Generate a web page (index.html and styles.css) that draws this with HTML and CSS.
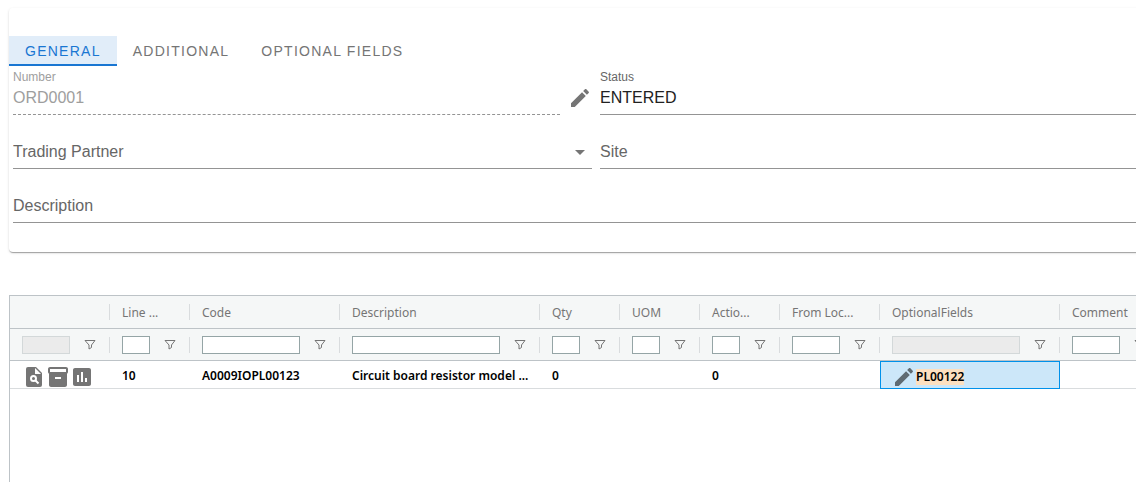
FILE: index.html
```html
<!DOCTYPE html>
<html lang="en">
<head>
<meta charset="utf-8">
<title>Order ORD0001</title>
<link rel="stylesheet" href="styles.css">
</head>
<body>
<svg class="sprite" aria-hidden="true">
  <symbol id="pencil" viewBox="0 0 24 24"><path d="M3 17.25V21h3.750L17.810 9.940l-3.750-3.750L3 17.250zM20.710 7.040c.39-.39.39-1.020 0-1.410l-2.340-2.340c-.39-.39-1.020-.39-1.410 0l-1.830 1.830 3.750 3.750 1.830-1.830z"/></symbol>
  <symbol id="funnel" viewBox="0 0 12 12"><path d="M1 1.500h10L7.500 6v2.500L5 10V6z" fill="none" stroke="currentColor"/></symbol>
</svg>
<main class="page">
  <section class="card">
    <div class="tabs" role="tablist">
      <button class="tab tab-active" role="tab" aria-selected="true">GENERAL</button>
      <button class="tab" role="tab" aria-selected="false">ADDITIONAL</button>
      <button class="tab" role="tab" aria-selected="false">OPTIONAL FIELDS</button>
    </div>
    <form class="form">
      <div class="with-action">
        <div class="field field-disabled">
          <label class="label" for="number">Number</label>
          <input class="control" id="number" value="ORD0001" disabled>
        </div>
        <button class="icon-button" type="button" aria-label="Edit number"><svg class="icon"><use href="#pencil"/></svg></button>
      </div>
      <div class="field">
        <label class="label" for="status">Status</label>
        <input class="control" id="status" value="ENTERED">
      </div>
      <div class="field">
        <select class="control select" aria-label="Trading Partner"><option>Trading Partner</option></select>
        <svg class="icon arrow" viewBox="0 0 24 24"><path d="M7 10l5 5 5-5z"/></svg>
      </div>
      <div class="field"><input class="control" aria-label="Site" placeholder="Site"></div>
      <div class="field field-wide"><input class="control" aria-label="Description" placeholder="Description"></div>
    </form>
  </section>

  <section class="grid">
    <table class="table">
      <colgroup>
        <col class="w100"><col class="w80"><col class="w150"><col class="w200"><col class="w80"><col class="w80"><col class="w80"><col class="w100"><col class="w180"><col class="w100"><col>
      </colgroup>
      <thead>
        <tr class="heads">
          <th></th><th>Line ...</th><th>Code</th><th>Description</th><th>Qty</th><th>UOM</th><th>Actio...</th><th>From Loc...</th><th>OptionalFields</th><th>Comment</th><th></th>
        </tr>
        <tr class="filters">
          <td><div class="filter"><input aria-label="Filter actions" disabled><button aria-label="Filter options"><svg><use href="#funnel"/></svg></button></div></td>
          <td><div class="filter"><input aria-label="Filter line"><button aria-label="Filter options"><svg><use href="#funnel"/></svg></button></div></td>
          <td><div class="filter"><input aria-label="Filter code"><button aria-label="Filter options"><svg><use href="#funnel"/></svg></button></div></td>
          <td><div class="filter"><input aria-label="Filter description"><button aria-label="Filter options"><svg><use href="#funnel"/></svg></button></div></td>
          <td><div class="filter"><input aria-label="Filter quantity"><button aria-label="Filter options"><svg><use href="#funnel"/></svg></button></div></td>
          <td><div class="filter"><input aria-label="Filter unit"><button aria-label="Filter options"><svg><use href="#funnel"/></svg></button></div></td>
          <td><div class="filter"><input aria-label="Filter action"><button aria-label="Filter options"><svg><use href="#funnel"/></svg></button></div></td>
          <td><div class="filter"><input aria-label="Filter from location"><button aria-label="Filter options"><svg><use href="#funnel"/></svg></button></div></td>
          <td><div class="filter"><input aria-label="Filter optional fields" disabled><button aria-label="Filter options"><svg><use href="#funnel"/></svg></button></div></td>
          <td><div class="filter"><input aria-label="Filter comment"><button aria-label="Filter options"><svg><use href="#funnel"/></svg></button></div></td>
          <td></td>
        </tr>
      </thead>
      <tbody>
        <tr class="row">
          <td><div class="cell">
            <button class="icon-button" aria-label="View details"><svg class="icon" viewBox="0 0 24 24"><path d="M6 2h8l6 6v12a2 2 0 0 1-2 2H6a2 2 0 0 1-2-2V4a2 2 0 0 1 2-2z"/><path class="cut" d="M13 3v6h6z"/><circle class="cut-line" cx="11.500" cy="13.500" r="2.500"/><path class="cut-line" d="M13.500 15.500l3 3"/></svg></button>
            <button class="icon-button" aria-label="Archive"><svg class="icon" viewBox="0 0 24 24"><path d="M20 2H4c-1 0-2 .9-2 2v3.010c0 .72.43 1.340 1 1.690V20c0 1.100 1.100 2 2 2h14c.9 0 2-.9 2-2V8.700c.57-.35 1-.97 1-1.690V4c0-1.100-1-2-2-2zm-5 12H9v-2h6v2zm5-7H4V4h16v3z"/></svg></button>
            <button class="icon-button" aria-label="Statistics"><svg class="icon" viewBox="0 0 24 24"><path d="M19 3H5c-1.100 0-2 .9-2 2v14c0 1.100.9 2 2 2h14c1.100 0 2-.9 2-2V5c0-1.100-.9-2-2-2zM9 17H7v-7h2v7zm4 0h-2V7h2v10zm4 0h-2v-4h2v4z"/></svg></button>
          </div></td>
          <td>10</td><td>A0009IOPL00123</td><td>Circuit board resistor model ...</td><td>0</td><td></td><td>0</td><td></td>
          <td class="selected"><div class="cell">
            <button class="icon-button" aria-label="Edit optional fields"><svg class="icon"><use href="#pencil"/></svg></button>
            <mark class="mark">PL00122</mark>
          </div></td>
          <td></td><td></td>
        </tr>
      </tbody>
    </table>
  </section>
</main>
</body>
</html>
```
FILE: styles.css
```css
* { box-sizing: border-box; }
body {
  margin: 0;
  background: #fff;
  font-family: "Liberation Sans", Arial, sans-serif;
}
button { margin: 0; padding: 0; border: 0; background: none; font: inherit; color: inherit; }
.sprite { display: none; }
.page {
  display: flex;
  flex-direction: column;
  min-height: 100vh;
  padding: 8px 0 0 9px;
  overflow: hidden;
}

/* Order form */
.card {
  margin-right: -47px;
  padding: 28px 0 29px;
  border-radius: 4px;
  box-shadow: 0 2px 1px -1px rgba(0, 0, 0, .2), 0 1px 1px rgba(0, 0, 0, .14), 0 1px 3px rgba(0, 0, 0, .12);
}
.tabs { display: flex; }
.tab {
  height: 30px;
  padding: 2px 16px 0;
  border-bottom: 2px solid transparent;
  font-size: 14px;
  letter-spacing: .09em;
  color: #757575;
}
.tab-active { background: #e1edf9; border-color: #1976d2; color: #1976d2; }
.form {
  display: grid;
  grid-template-columns: 1fr 1fr;
  gap: 8px;
  padding: 3px 4px 0;
}
.field {
  position: relative;
  display: flex;
  flex: 1;
  flex-direction: column;
  justify-content: flex-end;
  min-height: 46px;
  color: #666;
}
.field-wide { grid-column: span 2; }
.field-disabled { color: #9e9e9e; }
.label { font-size: 12px; line-height: 16px; }
.control {
  width: 100%;
  height: 30px;
  margin: 0;
  padding: 0 0 3px;
  border: 0;
  border-bottom: 1px solid #949494;
  border-radius: 0;
  outline: 0;
  background: none;
  font: 16px/24px "Liberation Sans", Arial, sans-serif;
  color: #212121;
}
.control::placeholder { color: #666; opacity: 1; }
.control:disabled { border-bottom-style: dashed; color: #9e9e9e; }
.select { appearance: none; color: #666; }
.with-action { display: flex; align-items: center; gap: 8px; }
.with-action .icon-button { padding-top: 12px; }
.icon-button { flex: none; width: 24px; }
.icon { display: block; width: 24px; height: 24px; fill: #757575; }
.arrow { position: absolute; right: 0; bottom: 5px; pointer-events: none; }

/* Order lines */
.grid {
  flex: 1;
  margin-top: 43px;
  border: 1px solid #bdc3c7;
  border-width: 1px 0 0 1px;
  overflow: hidden;
}
.table {
  width: 100%;
  min-width: 1160px;
  table-layout: fixed;
  border-collapse: separate;
  border-spacing: 0;
  font: 12px/16px "Noto Sans", sans-serif;
}
.w80 { width: 80px; }
.w100 { width: 100px; }
.w150 { width: 150px; }
.w180 { width: 180px; }
.w200 { width: 200px; }
.table th, .table td { padding: 0 0 0 12px; text-align: left; white-space: nowrap; }
.heads th, .filters td {
  border-bottom: 1px solid #bdc3c7;
  background: linear-gradient(#d9dcde, #d9dcde) right center / 1px 16px no-repeat #f5f7f7;
}
.table .heads th { height: 33px; padding-top: 2px; font-weight: 400; color: #757575; }
.filters td { height: 32px; }
.filter { display: flex; align-items: center; gap: 14px; padding-right: 14px; }
.filter input {
  flex: 1;
  min-width: 0;
  height: 18px;
  border: 1px solid #95a5a6;
  border-radius: 0;
  background: #fff;
}
.filter input:disabled { border-color: #d3d8d9; background: #ebebeb; }
.filter button { display: flex; color: #757575; }
.filter svg { width: 12px; height: 12px; }
.table .row td {
  height: 28px;
  padding-top: 2px;
  border-bottom: 1px solid #d9dcde;
  font-weight: 600;
  color: #000;
}
.cell { display: flex; align-items: center; height: 24px; margin: 1px 0 -1px; }
.table .row .selected {
  padding: 1px 0 0 11px;
  border: 1px solid #0091ea;
  background: #cce7f9;
}
.selected .icon { fill: #5f6b73; }
.mark { background: #fde0c0; color: #000; }
.cut { fill: #fff; }
.cut-line { fill: none; stroke: #fff; stroke-width: 2; }
```
